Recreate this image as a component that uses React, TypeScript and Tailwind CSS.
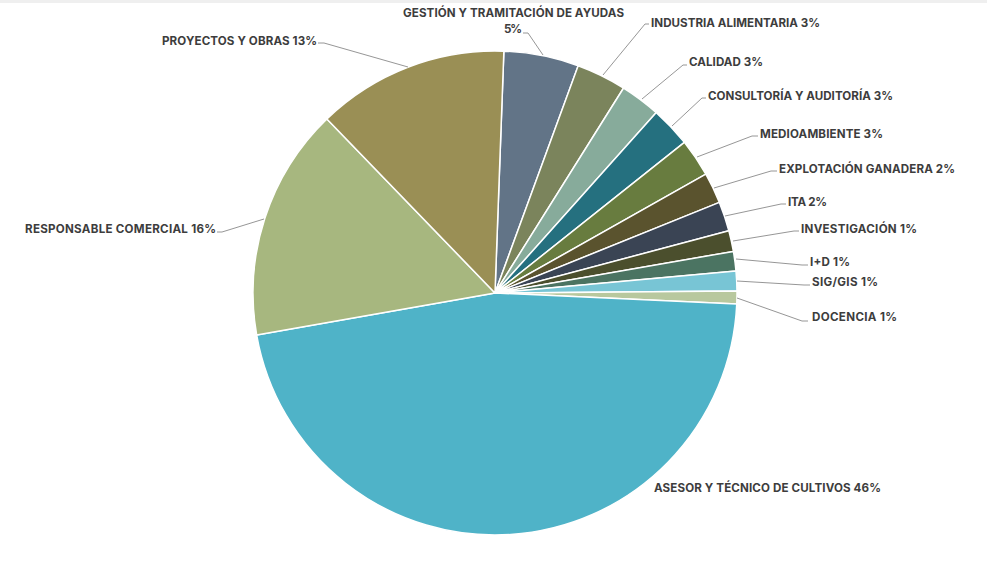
import React from 'react';

const CX = 495;
const CY = 293;
const R = 242;

// slice boundaries, degrees clockwise from 12 o'clock
const slices = [
  { from: 2.1, to: 20.1, color: '#627487' },
  { from: 20.1, to: 32.1, color: '#7b845c' },
  { from: 32.1, to: 41.8, color: '#87ab9b' },
  { from: 41.8, to: 51.5, color: '#25707f' },
  { from: 51.5, to: 60.6, color: '#687c3f' },
  { from: 60.6, to: 68.0, color: '#5a532e' },
  { from: 68.0, to: 75.1, color: '#3a4454' },
  { from: 75.1, to: 80.1, color: '#4b4f2d' },
  { from: 80.1, to: 84.8, color: '#4b7462' },
  { from: 84.8, to: 89.5, color: '#78c5d5' },
  { from: 89.5, to: 92.6, color: '#b8c89e' },
  { from: 92.6, to: 260.0, color: '#4fb3c8' },
  { from: 260.0, to: 316.0, color: '#a7b77f' },
  { from: 316.0, to: 362.1, color: '#9a8f55' },
];

const labels = [
  { text: 'GESTIÓN Y TRAMITACIÓN DE AYUDAS', x: 403, y: 17, w: 221 },
  { text: '5%', x: 504, y: 33, w: 18 },
  { text: 'INDUSTRIA ALIMENTARIA 3%', x: 651, y: 27, w: 169 },
  { text: 'CALIDAD 3%', x: 689, y: 66, w: 74 },
  { text: 'CONSULTORÍA Y AUDITORÍA 3%', x: 708, y: 100, w: 185 },
  { text: 'MEDIOAMBIENTE 3%', x: 760, y: 138, w: 123 },
  { text: 'EXPLOTACIÓN GANADERA 2%', x: 779, y: 173, w: 176 },
  { text: 'ITA 2%', x: 788, y: 206, w: 39 },
  { text: 'INVESTIGACIÓN 1%', x: 801, y: 233, w: 116 },
  { text: 'I+D 1%', x: 810, y: 266, w: 40 },
  { text: 'SIG/GIS 1%', x: 812, y: 286, w: 66 },
  { text: 'DOCENCIA 1%', x: 812, y: 321, w: 85 },
  { text: 'PROYECTOS Y OBRAS 13%', x: 162, y: 45, w: 155 },
  { text: 'RESPONSABLE COMERCIAL 16%', x: 25, y: 233, w: 191 },
  { text: 'ASESOR Y TÉCNICO DE CULTIVOS 46%', x: 654, y: 492, w: 227 },
];

const leaders = [
  '523,33 528,33 543,55',
  '649,24 645,24 603,75',
  '687,65 683,65 642,99',
  '706,98 702,98 672,126',
  '758,136 752,136 697,157',
  '777,171 771,171 714,188',
  '786,204 781,204 725,216',
  '799,231 794,231 733,241',
  '808,265 802,265 736,259',
  '810,285 804,285 737,281',
  '808,321 802,321 737,298',
  '318,43 324,43 408,67',
  '217,232 222,232 264,219',
];

function pt(deg: number) {
  const a = (deg * Math.PI) / 180;
  return [CX + R * Math.sin(a), CY - R * Math.cos(a)];
}

function slicePath(from: number, to: number) {
  const [x1, y1] = pt(from);
  const [x2, y2] = pt(to);
  const large = to - from > 180 ? 1 : 0;
  return `M${CX},${CY} L${x1.toFixed(2)},${y1.toFixed(2)} A${R},${R} 0 ${large} 1 ${x2.toFixed(2)},${y2.toFixed(2)} Z`;
}

export default function App() {
  return (
    <div className="w-[987px] h-[567px] bg-white border-t-[3px] border-[#efefef] overflow-hidden">
      <svg width={987} height={564} viewBox="0 3 987 564" className="block">
        {slices.map((s, i) => (
          <path key={i} d={slicePath(s.from, s.to)} fill={s.color} stroke="#ffffff" strokeWidth={1.5} strokeLinejoin="round" />
        ))}
        {leaders.map((p, i) => (
          <polyline key={i} points={p} fill="none" stroke="#8a8a8a" strokeWidth={0.9} />
        ))}
        {labels.map((l, i) => (
          <text
            key={i}
            x={l.x}
            y={l.y}
            textLength={l.w}
            fill="#3d3d3d"
            fontSize={11.6}
            fontWeight={700}
            fontFamily="Inter, 'Liberation Sans', sans-serif"
          >
            {l.text}
          </text>
        ))}
      </svg>
    </div>
  );
}
